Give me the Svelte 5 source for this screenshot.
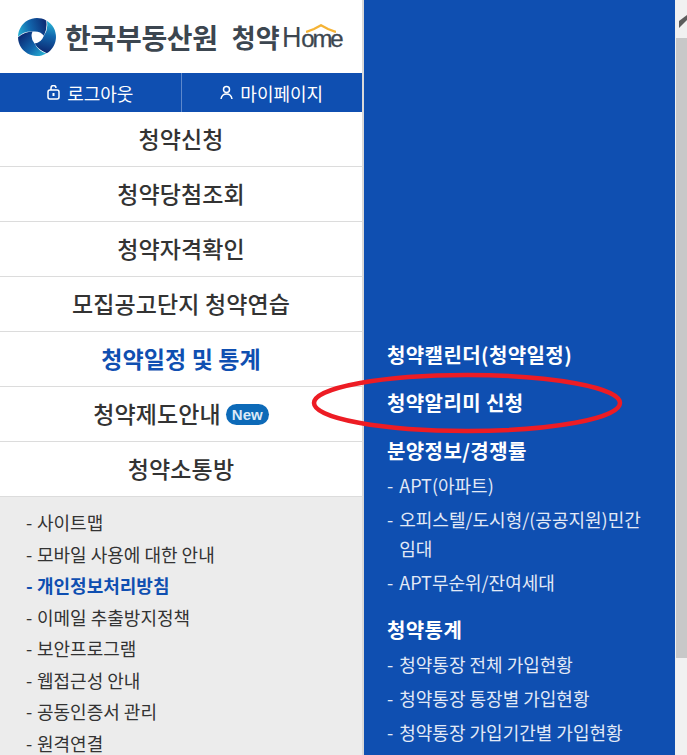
<script>
  const menus = [
    { label: '청약신청' },
    { label: '청약당첨조회' },
    { label: '청약자격확인' },
    { label: '모집공고단지 청약연습' },
    { label: '청약일정 및 통계', active: true },
    { label: '청약제도안내', isNew: true },
    { label: '청약소통방' }
  ];
  const footerLinks = [
    { label: '사이트맵' },
    { label: '모바일 사용에 대한 안내' },
    { label: '개인정보처리방침', strong: true },
    { label: '이메일 추출방지정책' },
    { label: '보안프로그램' },
    { label: '웹접근성 안내' },
    { label: '공동인증서 관리' },
    { label: '원격연결' }
  ];
  const subMenus = [
    { title: '청약캘린더(청약일정)' },
    { title: '청약알리미 신청' },
    { title: '분양정보/경쟁률', items: ['APT(아파트)', '오피스텔/도시형/(공공지원)민간임대', 'APT무순위/잔여세대'] },
    { title: '청약통계', items: ['청약통장 전체 가입현황', '청약통장 통장별 가입현황', '청약통장 가입기간별 가입현황'] }
  ];
  // one blade of the swirl, the other two are the same path rotated
  const blade = 'M-19-.3A19 19 0 0 1 9.200-16.600Q10.500-8 6.900-1.200Q3-6.500-4.500-5.400Q-13-6-19-.3Z';
</script>

<div class="page">
  <nav class="left">
    <header class="logo">
      <svg class="mark" width="38" height="38" viewBox="-19 -19 38 38" aria-hidden="true">
        <defs>
          <linearGradient id="blade" gradientUnits="userSpaceOnUse" x1="-18" y1="-2" x2="9" y2="-10">
            <stop offset="0" stop-color="#27aed2" />
            <stop offset="0.45" stop-color="#1266ad" />
            <stop offset="1" stop-color="#0c2f78" />
          </linearGradient>
        </defs>
        <path d={blade} fill="url(#blade)" />
        <path d={blade} fill="url(#blade)" transform="rotate(120)" />
        <path d={blade} fill="url(#blade)" transform="rotate(240)" />
      </svg>
      <span class="org">한국부동산원</span>
      <span class="svc">청약</span>
      <span class="home">
        <span class="h">H</span><span class="ome">ome</span>
        <svg class="roof" width="30" height="9" viewBox="0 0 30 9" aria-hidden="true"><path d="M0 8 8 5 15 1.300 22 5 30 8" fill="none" stroke="#f5b335" stroke-width="2.400" /></svg>
      </span>
    </header>

    <div class="account">
      <a href="#logout" class="acc">
        <svg width="13" height="15" viewBox="0 0 13 15" aria-hidden="true"><rect x="1" y="5" width="11" height="9" rx="2" fill="none" stroke="#fff" stroke-width="1.5" /><path d="M4 5V3a2.500 2.500 0 0 1 5 0" fill="none" stroke="#fff" stroke-width="1.5" /><rect x="5.500" y="8" width="2" height="3" fill="#fff" /></svg>
        로그아웃
      </a>
      <a href="#mypage" class="acc second">
        <svg width="13" height="15" viewBox="0 0 13 15" aria-hidden="true"><circle cx="6.500" cy="4.500" r="3" fill="none" stroke="#fff" stroke-width="1.5" /><path d="M1 14c.5-3 2.500-5 5.500-5s5 2 5.500 5" fill="none" stroke="#fff" stroke-width="1.5" /></svg>
        마이페이지
      </a>
    </div>

    <ul class="menu">
      {#each menus as m}
        <li class:active={m.active}>
          <a href="#menu">{m.label}</a>
          {#if m.isNew}<span class="new">New</span>{/if}
        </li>
      {/each}
    </ul>

    <ul class="foot">
      {#each footerLinks as f}
        <li class:strong={f.strong}><span class="dash">-</span>{f.label}</li>
      {/each}
    </ul>
  </nav>

  <section class="right">
    {#each subMenus as s}
      <div class="group">
        <h3>{s.title}</h3>
        {#if s.items}
          <ul>
            {#each s.items as it}
              <li><span>-</span><span>{it}</span></li>
            {/each}
          </ul>
        {/if}
      </div>
    {/each}
  </section>

  <aside class="scroll">
    <svg class="arrow" width="12" height="30" viewBox="0 0 12 30" aria-hidden="true"><path d="M4 21 12 15v5L4 28z" fill="#5c5c5c" /></svg>
    <div class="thumb"></div>
  </aside>

  <svg class="ring" width="316" height="66" viewBox="0 0 316 66" aria-hidden="true">
    <ellipse cx="158" cy="33" rx="153" ry="28" fill="none" stroke="#ed1c24" stroke-width="4.500" />
  </svg>
</div>

<style>
  :global(body) {
    margin: 0;
    font-family: "Noto Sans CJK KR", "Noto Sans", sans-serif;
  }

  .page {
    position: relative;
    display: flex;
    width: 687px;
    height: 755px;
    overflow: hidden;
    background: #fff;
  }

  ul {
    list-style: none;
    margin: 0;
    padding: 0;
  }

  a {
    color: inherit;
    text-decoration: none;
  }

  .left {
    width: 362px;
    flex: none;
    border-right: 2px solid #d9d9d9;
  }

  .logo {
    display: flex;
    align-items: center;
    height: 73px;
    padding-left: 18px;
    color: #3c4650;
    box-sizing: border-box;
  }

  .mark {
    flex: none;
    margin-right: 9px;
  }

  .org {
    font-size: 28px;
    font-weight: 700;
    letter-spacing: -0.3px;
  }

  .svc {
    font-size: 26px;
    font-weight: 700;
    margin-left: 14px;
  }

  .home {
    position: relative;
    display: flex;
    align-items: baseline;
    margin-left: 2px;
    font-family: "Liberation Sans", sans-serif;
    white-space: nowrap;
  }

  .h {
    display: inline-block;
    font-size: 30px;
    transform: scaleX(0.9);
    transform-origin: left;
    margin-right: -2px;
  }

  .ome {
    font-size: 24px;
    letter-spacing: -2.2px;
    -webkit-text-stroke: 0.3px #3c4650;
  }

  .roof {
    position: absolute;
    left: 24px;
    top: 4px;
  }

  .account {
    display: flex;
    height: 39px;
    background: #0f4fb1;
    color: #fff;
    font-size: 18px;
  }

  .acc {
    flex: 1;
    display: flex;
    align-items: center;
    justify-content: center;
    gap: 7px;
  }

  .second {
    border-left: 1px solid #5d88cc;
  }

  .menu li {
    display: flex;
    align-items: center;
    justify-content: center;
    gap: 5px;
    height: 51px;
    padding-bottom: 3px;
    border-bottom: 1px solid #dcdcdc;
    font-size: 23px;
    font-weight: 500;
    color: #333;
    letter-spacing: 0.1px;
  }

  .menu li.active {
    color: #0f4fb1;
    font-weight: 700;
  }

  .new {
    margin-top: 3px;
    background: #0d6ab8;
    color: #dbe9f7;
    font-family: "Liberation Sans", sans-serif;
    font-size: 15px;
    font-weight: 700;
    line-height: 21px;
    padding: 0 6px;
    border-radius: 11px;
    letter-spacing: 0;
  }

  .foot {
    background: #ececec;
    padding: 10px 0 0 26px;
    height: 300px;
    font-size: 18px;
    color: #333;
  }

  .dash {
    display: inline-block;
    width: 11px;
  }

  .foot li {
    height: 31.5px;
    line-height: 31.5px;
    white-space: nowrap;
  }

  .foot .strong {
    color: #0f4fb1;
    font-weight: 700;
  }

  .right {
    flex: 1;
    background: #0f4fb1;
    color: #fff;
    padding: 340px 32px 0 23px;
    box-sizing: border-box;
  }

  .group {
    margin-bottom: 18px;
  }

  .group h3 {
    margin: 0;
    font-size: 20px;
    font-weight: 700;
    line-height: 30px;
    letter-spacing: 0.4px;
  }

  .group ul {
    margin-top: 5px;
    color: #e2e9f6;
    font-size: 18px;
    line-height: 29px;
  }

  .group li {
    display: flex;
    gap: 6px;
    margin-bottom: 5px;
  }

  .scroll {
    position: relative;
    flex: none;
    width: 12px;
    background: #f1f1f1;
  }

  .arrow {
    position: absolute;
    left: 0;
    top: 0;
  }

  .thumb {
    position: absolute;
    left: 1px;
    right: 0;
    top: 38px;
    height: 620px;
    background: #c8c8c8;
  }

  .ring {
    position: absolute;
    left: 309px;
    top: 370px;
  }
</style>
